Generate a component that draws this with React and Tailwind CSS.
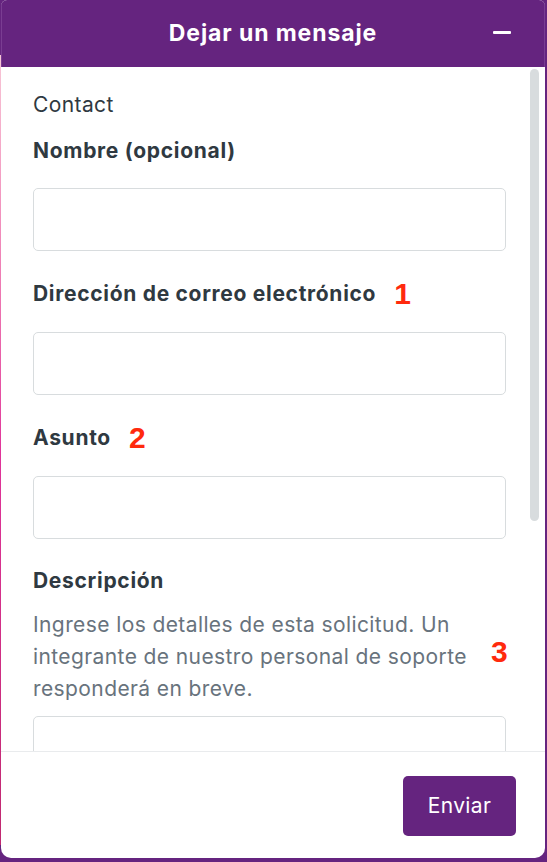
import React from "react";

function Field({ label, num, mt = "mt-[29px]" }) {
  return (
    <>
      <div className={`${mt} flex items-center h-[28px]`}>
        <span className="text-[21px] leading-[28px] font-bold tracking-[0.7px] text-[#2f3941]">{label}</span>
        {num && (
          <span className="ml-[18px] text-[30px] leading-[28px] font-bold text-[#ff2a0d] [font-family:'Liberation_Sans',Arial,sans-serif]">
            {num}
          </span>
        )}
      </div>
      <div className="mt-[24px] h-[63px] rounded-[5px] border border-[#d8dcde] bg-white" />
    </>
  );
}

export default function App() {
  return (
    <div className="relative h-[862px] w-[547px] overflow-hidden bg-[#65247f] [font-family:Inter,'Noto_Sans',sans-serif]">
      <div className="absolute left-0 top-[55px] h-[790px] w-[1px] bg-gradient-to-b from-[#f7c6d6] via-[#e0349a] to-[#c02970]" />
      <div className="ml-[1px] flex h-[858px] w-[544px] flex-col overflow-hidden rounded-b-[10px] rounded-t-[6px] bg-white">
        <div className="relative flex h-[67px] shrink-0 items-center justify-center border-x border-[#7a3d92] bg-[#65247f]">
          <span className="text-[23px] font-bold tracking-[0.9px] text-white">Dejar un mensaje</span>
          <div className="absolute right-[33px] top-[31px] h-[3px] w-[18px] rounded-[1px] bg-white" />
        </div>
        <div className="flex min-h-0 flex-1 overflow-hidden">
          <div className="ml-[32px] w-[473px] shrink-0 pt-[24px]">
            <div className="text-[21px] leading-[28px] tracking-[0.4px] text-[#2f3941]">Contact</div>
            <div className="mt-[18px] text-[21px] leading-[28px] font-bold tracking-[0.7px] text-[#2f3941]">Nombre (opcional)</div>
            <div className="mt-[23px] h-[63px] rounded-[5px] border border-[#d8dcde] bg-white" />
            <Field label="Dirección de correo electrónico" num="1" />
            <Field label="Asunto" num="2" />
            <div className="mt-[28px] text-[21px] leading-[28px] font-bold tracking-[0.7px] text-[#2f3941]">Descripción</div>
            <div className="mt-[14px] flex items-center">
              <p className="w-[452px] shrink-0 text-[21px] leading-[32px] tracking-[0.4px] text-[#68737d]">
                Ingrese los detalles de esta solicitud. Un integrante de nuestro personal de soporte responderá en breve.
              </p>
              <span className="ml-[6px] -mt-[10px] text-[30px] leading-[28px] font-bold text-[#ff2a0d] [font-family:'Liberation_Sans',Arial,sans-serif]">
                3
              </span>
            </div>
            <div className="mt-[11px] h-[100px] rounded-[5px] border border-[#d8dcde] bg-white" />
          </div>
          <div className="ml-[24px] mt-[2px] h-[452px] w-[9px] shrink-0 rounded-full bg-[#d8dcde]" />
        </div>
        <div className="flex h-[107px] shrink-0 items-start justify-end border-t border-[#e9ebed] pr-[29px] pt-[24px]">
          <button className="h-[60px] w-[113px] rounded-[5px] bg-[#65247f] text-[21px] tracking-[0.4px] text-white">Enviar</button>
        </div>
      </div>
    </div>
  );
}
